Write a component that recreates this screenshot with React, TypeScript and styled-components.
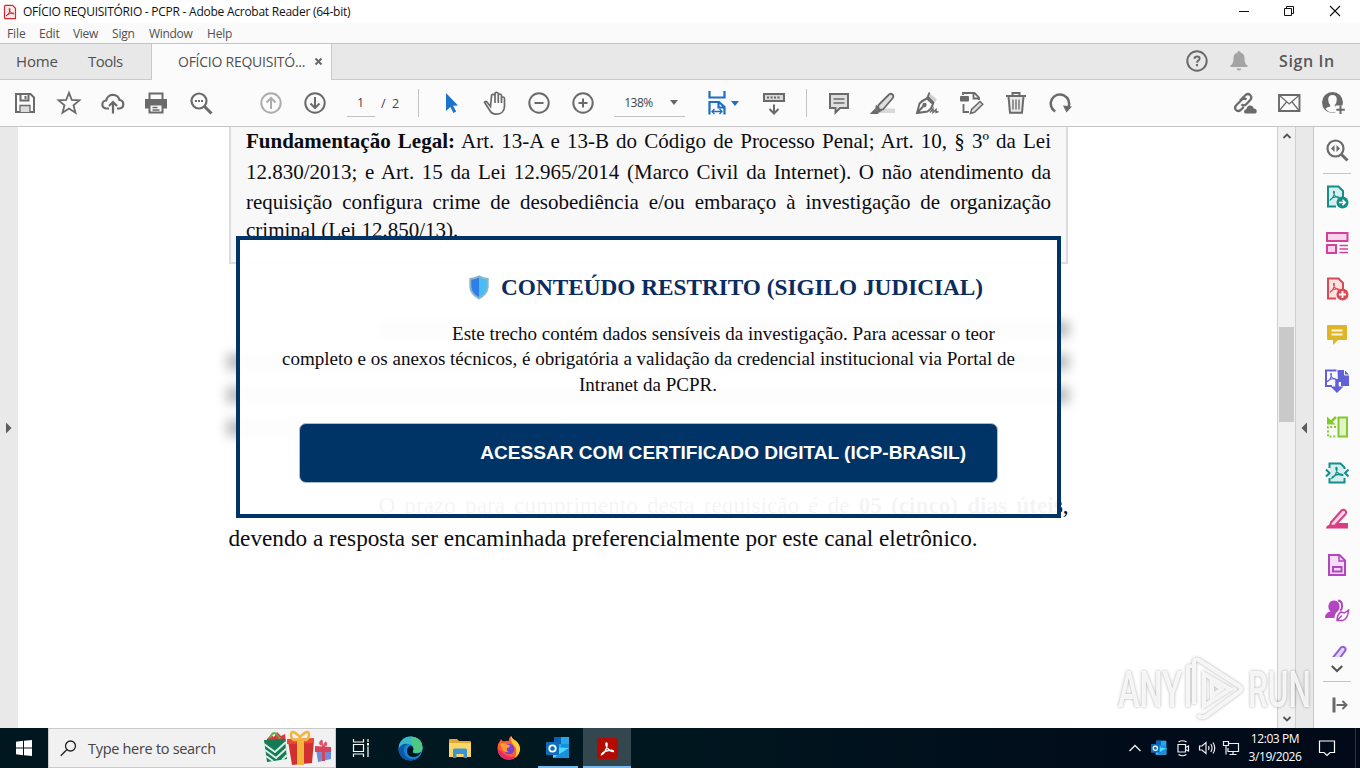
import React from "react";
import styled, { createGlobalStyle } from "styled-components";

const Global = createGlobalStyle`
  * { box-sizing: border-box; }
  body { margin: 0; overflow: hidden; font-family: "Open Sans", "Noto Sans", sans-serif; }
  #root { height: 100vh; }
`;

const Screen = styled.div`
  width: 1360px;
  height: 768px;
  display: flex;
  flex-direction: column;
  background: #fff;
  overflow: hidden;
  position: relative;
`;

const Label = styled.span<{ $size: number; $sp?: number; $color?: string; $weight?: number }>`
  font-size: ${(p) => p.$size}px;
  letter-spacing: ${(p) => p.$sp ?? 0}px;
  color: ${(p) => p.$color ?? "#505050"};
  font-weight: ${(p) => p.$weight ?? 400};
  white-space: nowrap;
`;

const Svg = styled.svg<{ $c?: string; $w?: number }>`
  display: block;
  flex: none;
  overflow: visible;
  fill: none;
  stroke: ${(p) => p.$c ?? "#6a6a6a"};
  stroke-width: ${(p) => p.$w ?? 2};
`;

type IconProps = { c?: string; w?: number; size?: number; children: React.ReactNode };
const Icon = ({ c, w, size = 24, children }: IconProps) => (
  <Svg width={size} height={size} viewBox={`0 0 ${size} ${size}`} $c={c} $w={w}>
    {children}
  </Svg>
);

/* ---------- window chrome ---------- */
const TitleBar = styled.div`
  height: 23px;
  flex: none;
  display: flex;
  align-items: center;
  padding-left: 3px;
  gap: 6px;
`;
const WindowButtons = styled.div`
  margin-left: auto;
  padding-right: 2px;
  margin-top: -2px;
  display: flex;
`;
const Cell = styled.div<{ $w: number; $h?: number }>`
  width: ${(p) => p.$w}px;
  height: ${(p) => (p.$h ? p.$h + "px" : "100%")};
  flex: none;
  display: flex;
  align-items: center;
  justify-content: center;
`;
const Gap = styled.div<{ $w: number }>`
  width: ${(p) => p.$w}px;
  flex: none;
`;
const MenuBar = styled.div`
  height: 20px;
  flex: none;
  background: #fafafa;
  display: flex;
  align-items: center;
  padding: 0 0 2px 7px;
`;
const MenuItem = styled.div<{ $w: number }>`
  width: ${(p) => p.$w}px;
`;
const TabBar = styled.div`
  height: 37px;
  flex: none;
  border-top: 1px solid #c4c4c4;
  border-bottom: 1px solid #cacaca;
  background: #e8e8e8;
  display: flex;
  align-items: center;
  padding: 0 0 1px 16px;
`;
const Tab = styled.div`
  width: 181px;
  height: 36px;
  margin-bottom: -2px;
  background: #fbfbfb;
  border: solid #c8c8c8;
  border-width: 0 1px;
  display: flex;
  align-items: center;
  padding: 0 8px 1px 26px;
  justify-content: space-between;
`;
const ToolBar = styled.div`
  height: 47px;
  flex: none;
  background: #fbfbfb;
  border-bottom: 1px solid #c6c6c6;
  display: flex;
  align-items: center;
  padding-left: 3px;
`;
const Separator = styled.div`
  width: 1px;
  height: 28px;
  background: #c4c4c4;
  flex: none;
`;
const Field = styled.div<{ $w: number }>`
  width: ${(p) => p.$w}px;
  height: 28px;
  flex: none;
  border-bottom: 1px solid #c0c0c0;
  display: flex;
  align-items: center;
  justify-content: space-between;
  padding: 0 7px 0 10px;
`;
const Caret = styled.div<{ $c?: string }>`
  border: 4px solid transparent;
  border-top: 5px solid ${(p) => p.$c ?? "#666"};
  border-bottom: 0;
`;

/* ---------- document area ---------- */
const Body = styled.div`
  flex: 1;
  min-height: 0;
  display: flex;
`;
const LeftRail = styled.div`
  width: 18px;
  flex: none;
  background: #e9e9e9;
  display: flex;
  align-items: center;
  justify-content: center;
`;
const Page = styled.div`
  width: 1259px;
  flex: none;
  position: relative;
  background: #fff;
  overflow: hidden;
  font-family: "Liberation Serif", serif;
  color: #0c0c10;
`;
const LegalBox = styled.div`
  margin-left: 211px;
  width: 839px;
  height: 137px;
  background: #f8f8f8;
  border: solid #dcdcdf;
  border-width: 0 2px 2px;
  padding: 0 15px;
  font-size: 21px;
`;
const Line = styled.div<{ $h: number; $natural?: boolean }>`
  height: ${(p) => p.$h}px;
  line-height: ${(p) => p.$h}px;
  white-space: nowrap;
  text-align: justify;
  text-align-last: ${(p) => (p.$natural ? "left" : "justify")};
`;
const Redacted = styled.div`
  margin: 57px 0 0 209px;
  width: 842px;
  display: flex;
  flex-direction: column;
  gap: 17px;
  filter: blur(6px);
`;
const RedactedLine = styled.div<{ $from?: number; $to?: number }>`
  height: 16px;
  margin-left: ${(p) => p.$from ?? 0}px;
  margin-right: ${(p) => p.$to ?? 0}px;
  background: #b8b8b8;
`;
const Closing = styled.div`
  margin: 52px 0 0 210.5px;
  width: 840px;
  font-size: 23.22px;
`;
const Indented = styled.div`
  margin-left: 150px;
`;
const Notice = styled.div`
  position: absolute;
  left: 218px;
  top: 109px;
  width: 825px;
  height: 282px;
  border: 4px solid #003366;
  background: rgba(255, 255, 255, 0.955);
`;
const NoticeTitle = styled.div`
  display: flex;
  align-items: center;
  gap: 9px;
  padding-left: 227px;
  margin: 34px 0 21px;
  height: 26px;
  font-size: 23.25px;
  font-weight: 700;
  color: #0b2c60;
  white-space: nowrap;
`;
const NoticeText = styled.div<{ $left: number; $h: number }>`
  padding-left: ${(p) => p.$left}px;
  height: ${(p) => p.$h}px;
  line-height: ${(p) => p.$h}px;
  font-size: 19.05px;
  white-space: nowrap;
`;
const NoticeButton = styled.div`
  margin: 24px 0 0 59px;
  width: 699px;
  height: 60px;
  border-radius: 7px;
  border: 1px solid #a9bccf;
  background: #003366;
  color: #fff;
  font: 700 19.08px/57px "Liberation Sans", sans-serif;
  text-align: right;
  padding-right: 31px;
  white-space: nowrap;
`;
const ScrollBar = styled.div`
  width: 19px;
  flex: none;
  background: #f1f1f1;
  border-left: 1px solid #cfcfcf;
  border-right: 1px solid #cfcfcf;
  display: flex;
  flex-direction: column;
  align-items: center;
`;
const Thumb = styled.div`
  width: 15px;
  height: 95px;
  margin: 182px 0 auto;
  background: #c9c9c9;
`;
const RightRail = styled(LeftRail)`
  border-right: 1px solid #c9c9c9;
  padding-right: 2px;
`;
const ToolPane = styled.div`
  flex: 1;
  background: #fbfbfb;
  display: flex;
  flex-direction: column;
  align-items: center;
`;
const PaneRule = styled.div`
  width: 28px;
  height: 1px;
  background: #c4c4c4;
`;
const Clipped = styled.div`
  height: 23px;
  overflow: hidden;
  width: 46px;
  display: flex;
  justify-content: center;
`;

/* ---------- taskbar ---------- */
const TaskBar = styled.div`
  height: 40px;
  flex: none;
  background: linear-gradient(90deg, #00171f 0, #001820 45%, #010b1a 85%, #020a19 100%);
  display: flex;
`;
const SearchBox = styled.div`
  width: 288px;
  height: 40px;
  background: #f1f1f1;
  border: 1px solid #c9c9c9;
  display: flex;
  align-items: center;
  padding: 0 3px 0 11px;
  gap: 11px;
`;
const Gifts = styled.svg`
  margin-left: auto;
`;
const AppSlot = styled.div<{ $active?: boolean; $w?: number }>`
  width: ${(p) => p.$w ?? 49}px;
  height: 40px;
  flex: none;
  display: flex;
  align-items: center;
  justify-content: center;
  background: ${(p) => (p.$active ? "#34474f" : "transparent")};
  box-shadow: ${(p) => (p.$active !== undefined ? "inset 0 -2px #76b9ed" : "none")};
`;
const Tray = styled.div`
  margin-left: auto;
  display: flex;
  align-items: center;
`;
const Clock = styled.div`
  width: 64px;
  display: flex;
  flex-direction: column;
  align-items: center;
  line-height: 18px;
`;
const PeekEdge = styled.div`
  width: 5px;
  height: 40px;
  border-left: 1px solid #2a3442;
`;
const Watermark = styled.svg`
  position: absolute;
  left: 1112px;
  top: 652px;
  filter: drop-shadow(0 0 1.5px rgba(0, 0, 0, 0.38));
`;

const Trefoil = ({ x = 0, y = 0, s = 1, c }: { x?: number; y?: number; s?: number; c?: string }) => (
  <path
    transform={`translate(${x} ${y}) scale(${s})`}
    stroke={c}
    strokeWidth={1.3}
    d="M1 10.5C3.5 9.5 6 5 5.7 1.2C5.6 0 4.5 .3 4.7 1.6C5.2 4.8 8 7.8 10.6 7.9C12 7.8 11 6.7 9 6.8C6 7 2.5 8.5 1.2 9.8Z"
  />
);

const Outlook = ({ size }: { size: number }) => (
  <svg width={size} height={size} viewBox="0 0 24 24">
    <rect x="8" y="1" width="15" height="14" fill="#28a8ea" />
    <path d="M8 1h7v7H8z" fill="#0364b8" />
    <path d="M15 8h8v7h-8z" fill="#1490df" />
    <path d="M7 11l16 1v9a1 1 0 0 1-1 1H7z" fill="#50d9ff" />
    <path d="M7 22l16-10v9a1 1 0 0 1-1 1z" fill="#1a8fdb" />
    <rect x="0" y="6" width="13" height="13" rx="1" fill="#0f6cbd" />
    <circle cx="6.5" cy="12.5" r="3.2" fill="none" stroke="#fff" strokeWidth="1.8" />
  </svg>
);

export default function App() {
  return (
    <>
      <Global />
      <Screen>
        <TitleBar>
          <Icon size={14} w={1.2} c="#d22a2a">
            <path d="M2.5 .3h7l3 3v10.4h-10q-1 0-1-1v-11q0-1.400 1-1.400z" fill="#fdeaea" />
            <Trefoil x={2.6} y={3} s={0.75} c="#c41e1e" />
          </Icon>
          <Label $size={12} $sp={-0.25} $color="#111">
            OFÍCIO REQUISITÓRIO - PCPR - Adobe Acrobat Reader (64-bit)
          </Label>
          <WindowButtons>
            <Cell $w={46} $h={22}>
              <Icon size={12} c="#111" w={1}><path d="M1 6.500h10" /></Icon>
            </Cell>
            <Cell $w={44} $h={22}>
              <Icon size={12} c="#111" w={1}>
                <path d="M1.500 3.500h7v7h-7zM3.500 3.500v-2h7v7h-2" />
              </Icon>
            </Cell>
            <Cell $w={47} $h={22}>
              <Icon size={12} c="#111" w={1.1}><path d="M1 1l10 10M11 1L1 11" /></Icon>
            </Cell>
          </WindowButtons>
        </TitleBar>

        <MenuBar>
          <MenuItem $w={32}><Label $size={12} $sp={-0.1}>File</Label></MenuItem>
          <MenuItem $w={34}><Label $size={12} $sp={-0.2}>Edit</Label></MenuItem>
          <MenuItem $w={39}><Label $size={12} $sp={-0.3}>View</Label></MenuItem>
          <MenuItem $w={37}><Label $size={12} $sp={-0.2}>Sign</Label></MenuItem>
          <MenuItem $w={58}><Label $size={12} $sp={-0.3}>Window</Label></MenuItem>
          <MenuItem $w={40}><Label $size={12} $sp={-0.2}>Help</Label></MenuItem>
        </MenuBar>

        <TabBar>
          <MenuItem $w={72}><Label $size={15} $sp={-0.15}>Home</Label></MenuItem>
          <MenuItem $w={63}><Label $size={15} $sp={-0.5}>Tools</Label></MenuItem>
          <Tab>
            <Label $size={14} $sp={-0.25}>OFÍCIO REQUISITÓ...</Label>
            <Icon size={9} w={2}><path d="M1.500 1.500l6 6M7.500 1.500l-6 6" /></Icon>
          </Tab>
          <Gap $w={844} />
          <Cell $w={42}>
            <Icon>
              <circle cx="12" cy="12" r="9.700" />
              <path d="M9.500 9.800q.2-2.300 2.600-2.300q2.500 0 2.500 2.100q0 1.200-1.400 2.100q-1.100.7-1.100 2.100M12 15v2.200" />
            </Icon>
          </Cell>
          <Cell $w={41}>
            <Icon c="none">
              <path fill="#a4a4a4" d="M12 2q1.500 0 1.500 1.600q4 1 4 5.600q0 5.500 3 7.300v1.500h-17v-1.500q3-1.800 3-7.300q0-4.600 4-5.600q0-1.600 1.500-1.600zM9.500 19.500h5q-.5 2-2.500 2t-2.500-2z" />
            </Icon>
          </Cell>
          <Gap $w={20} />
          <Label $size={16} $sp={0.6} $weight={600} $color="#585858">Sign In</Label>
        </TabBar>

        <ToolBar>
          <Cell $w={44}>
            <Icon>
              <path d="M3 3h14.500L21 6.500V21H3z" />
              <path d="M7.500 3v6.500h8V3M12.500 5v3" />
              <path d="M7 21v-6.500h10V21" fill="#dcdcdc" strokeWidth="1.300" />
            </Icon>
          </Cell>
          <Cell $w={44}>
            <Icon w={1.8}>
              <path d="M12 1.800l2.800 7.200 7.600.4-5.900 4.900 2 7.500L12 17.600 5.500 21.800l2-7.500-5.900-4.900 7.600-.4z" />
            </Icon>
          </Cell>
          <Cell $w={44}>
            <Icon w={2.200}>
              <path d="M8 17.500H5.500a4 4 0 0 1-.3-8 6.800 6.800 0 0 1 13.300-.5 4.300 4.300 0 0 1 .3 8.500H16" />
              <path d="M12 22.500V11.500M8 15l4-4 4 4" />
            </Icon>
          </Cell>
          <Cell $w={42}>
            <Icon>
              <path d="M5.500 8V2.500h13V8" />
              <path d="M1 8h22v9.500h-4v-4H5v4H1z" fill="#6a6a6a" stroke="none" />
              <path d="M5.500 13.500h13v8h-13z" fill="#fbfbfb" />
              <path d="M8.500 16.500h5M8.500 19h7" strokeWidth="1.300" />
            </Icon>
          </Cell>
          <Cell $w={47}>
            <Icon w={2.200}>
              <circle cx="10" cy="10" r="7.500" />
              <path d="M15.500 15.500l7 7" strokeWidth="3" />
              <path d="M6 10h8" strokeDasharray="2 1" />
            </Icon>
          </Cell>
          <Gap $w={25} />
          <Cell $w={44}>
            <Icon c="#acacac"><circle cx="12" cy="12" r="9.700" /><path d="M12 18V7M7.500 11.500L12 7l4.500 4.500" /></Icon>
          </Cell>
          <Cell $w={44}>
            <Icon><circle cx="12" cy="12" r="9.700" /><path d="M12 6v11M7.500 12.500L12 17l4.500-4.500" /></Icon>
          </Cell>
          <Gap $w={10} />
          <Field $w={28}><Label $size={12.5} $color="#444">1</Label></Field>
          <Gap $w={6} />
          <Label $size={12.5} $color="#444">/ &nbsp;2</Label>
          <Gap $w={19} />
          <Separator />
          <Gap $w={10} />
          <Cell $w={44}>
            <Icon c="none"><path fill="#1b74c9" d="M7 2l12 12.500-5 .3 3.200 5.700-2.800 1.500-3-6L7 20z" /></Icon>
          </Cell>
          <Cell $w={44}>
            <Icon w={1.700}>
              <path d="M7.500 15.500L4 11q-1.500-1.200-2.500.3L6.500 19q2.300 4.200 6.500 4.200c5 0 8.500-3 8.500-8V7.500q-.2-1.500-1.500-1.500t-1.500 1.500V12V4.500Q18.200 3 16.800 3t-1.500 1.500V12V3Q15.200 1.300 13.500 1.300T12 3v9V4.800Q11.700 3.300 10 3.300T8.500 5z" />
            </Icon>
          </Cell>
          <Cell $w={44}>
            <Icon><circle cx="12" cy="12" r="9.700" /><path d="M7.500 12h9" /></Icon>
          </Cell>
          <Cell $w={44}>
            <Icon><circle cx="12" cy="12" r="9.700" /><path d="M7.500 12h9M12 7.500v9" /></Icon>
          </Cell>
          <Gap $w={9} />
          <Field $w={71}><Label $size={12} $sp={-0.5} $color="#444">138%</Label><Caret /></Field>
          <Gap $w={20} />
          <Cell $w={24}>
            <Icon c="#1b6fc0" w={2.200}>
              <path d="M4.500 0v6.500h15V0M4.500 23.500V11h9.500l5.500 5v7.500M13.500 11v5.500h6" />
              <path d="M7.500 20.500h9M9.500 18l-2.500 2.500 2.500 2.500M14.500 18l2.500 2.500-2.500 2.500" strokeWidth="1.300" />
            </Icon>
          </Cell>
          <Gap $w={2} />
          <Caret $c="#1b6fc0" />
          <Gap $w={22} />
          <Cell $w={26}>
            <Icon>
              <path d="M2 3h20v7H2z" fill="#d8d8d8" />
              <path d="M5 6.500h14" strokeDasharray="2 1.500" />
              <path d="M12 13.500v9M7.500 18l4.500 4.500 4.500-4.500" />
            </Icon>
          </Cell>
          <Gap $w={19} />
          <Separator />
          <Gap $w={10} />
          <Cell $w={44}>
            <Icon><path d="M3 3h18v14h-8l-4.500 4.500V17H3z" fill="#dedede" /><path d="M6.500 8h11M6.500 12h11" strokeWidth="1.500" /></Icon>
          </Cell>
          <Cell $w={44}>
            <Icon w={1.800}>
              <path d="M10 17.500h14v4.500H8z" fill="#d8d8d8" stroke="none" />
              <path d="M7.500 14L18 3.500q2-1.500 3.500 0t.3 3.500L12 18.500l-5 .7z" fill="#dedede" />
              <path d="M5.500 15.500l4 4-2.500 1.500h-2.500z" />
              <path d="M1 22l3-3 2 3z" fill="#6a6a6a" />
            </Icon>
          </Cell>
          <Cell $w={44}>
            <Icon w={1.900}>
              <path d="M12 7.500L15 2.500 22 8.500l-4 4.500z" fill="#d0d0d0" stroke="none" />
              <path d="M2 22L4.500 12.500Q8 9 12 7.500L18 13q-1.500 5-5.500 7.500zM2 22l6.500-7" />
              <circle cx="9.500" cy="14" r="1.200" />
              <path d="M12 7.500L14.500 1.500M12.500 5.500l6.500 7" />
              <path d="M15 21.500l3-4v4l3-3v3l2.500-1" strokeWidth="1.400" />
            </Icon>
          </Cell>
          <Cell $w={44}>
            <Icon w={1.800}>
              <path d="M4 4V2h11.500L20 6.500V9M14.500 2v5.500H20M4.500 13v8H10" />
              <rect x="1" y="5" width="9" height="5.500" rx="1" fill="#6a6a6a" stroke="none" />
              <path d="M11.500 22.500l1-4L21 10.500l2.800 2.800-8.300 8z" fill="#dedede" strokeWidth="1.500" />
            </Icon>
          </Cell>
          <Cell $w={46}>
            <Icon><path d="M4.500 5.500L6 21.800h12l1.500-16.300" fill="#e8e8e8" /><path d="M2 5h20M8.500 4.500V2h7v2.500" /><path d="M9 8.500v10M12 8.500v10M15 8.500v10" strokeWidth="1.300" /></Icon>
          </Cell>
          <Cell $w={41}>
            <Icon w={2.500}><path d="M7.200 20.500a9.200 9.200 0 1 1 13.300-4.500" /><path fill="#6a6a6a" stroke="none" d="M15 14.500l9 1-5.500 6z" /></Icon>
          </Cell>
          <Gap $w={142} />
          <Cell $w={44}>
            <Icon w={2.200}>
              <path d="M8 9.500l5.500-5.500q2.500-2 4.700 0t.3 4.700L14 13.500q-2.500 1.800-4.500-.3M14.500 8.500q-2.500-2-4.500 0l-6 6q-2 2.500 0 4.500t4.700 0l3-3" />
              <path d="M13.500 22.500q-1.500 0-1.500-2t2.500-2.500q.5-3.500 3.500-3.500t3.700 3q3 0 3 2.700t-2 2.300z" fill="#6a6a6a" stroke="none" />
            </Icon>
          </Cell>
          <Cell $w={45}>
            <Icon w={1.900}><path d="M2 4h20.500v16H2z" /><path d="M2 4l10.200 9L22.500 4M2 20l7.500-9M22.500 20L15 11" strokeWidth="1.200" /></Icon>
          </Cell>
          <Cell $w={44}>
            <Icon w={2}>
              <circle cx="11.500" cy="11.500" r="10.500" fill="#6a6a6a" stroke="none" />
              <path d="M11.500 4q4.300 0 4.300 4.500 0 3.500-2 5.500v1.500q3 .5 4.700 2-2.500 4-7 4t-7-4q1.700-1.500 4.700-2V14q-2-2-2-5.500Q7.200 4 11.500 4z" fill="#fbfbfb" stroke="none" />
              <path d="M14.500 14.500h9v9h-9z" fill="#fbfbfb" stroke="none" />
              <path d="M19.500 14.500v8.500M15.300 18.700h8.500" />
            </Icon>
          </Cell>
        </ToolBar>

        <Body>
          <LeftRail><Icon size={8} c="none"><path d="M1 -1.500l5.500 5.500-5.500 5.500z" fill="#5c5c5c" /></Icon></LeftRail>
          <Page>
            <LegalBox>
              <Line $h={28}><b>Fundamentação Legal:</b> Art. 13-A e 13-B do Código de Processo Penal; Art. 10, § 3º da Lei</Line>
              <Line $h={34}>12.830/2013; e Art. 15 da Lei 12.965/2014 (Marco Civil da Internet). O não atendimento da</Line>
              <Line $h={27}>requisição configura crime de desobediência e/ou embaraço à investigação de organização</Line>
              <Line $h={29} $natural>criminal (Lei 12.850/13).</Line>
            </LegalBox>
            <Redacted>
              <RedactedLine $from={150} />
              <RedactedLine />
              <RedactedLine />
              <RedactedLine $to={500} />
            </Redacted>
            <Closing>
              <Indented>
                <Line $h={34}>O prazo para cumprimento desta requisição é de <b>05 (cinco) dias úteis</b>,</Line>
              </Indented>
              <Line $h={32} $natural>devendo a resposta ser encaminhada preferencialmente por este canal eletrônico.</Line>
            </Closing>
            <Notice>
              <NoticeTitle>
                <Icon size={25} c="none">
                  <path d="M12 .3q4.500 2.500 9.700 2.800V12q-.7 8-9.700 12.500Q3 20 2.300 12V3.100Q7.500 2.800 12 .3z" fill="#8fb4c8" />
                  <path d="M12 2.500Q8 4.500 4.300 4.800V12q.6 6.500 7.700 10.200z" fill="#2f7fe6" />
                  <path d="M12 2.500q4 2 7.700 2.300V12q-.6 6.500-7.700 10.200z" fill="#46bdf8" />
                </Icon>
                CONTEÚDO RESTRITO (SIGILO JUDICIAL)
              </NoticeTitle>
              <NoticeText $left={212} $h={26}>Este trecho contém dados sensíveis da investigação. Para acessar o teor</NoticeText>
              <NoticeText $left={42} $h={24}>completo e os anexos técnicos, é obrigatória a validação da credencial institucional via Portal de</NoticeText>
              <NoticeText $left={339} $h={28}>Intranet da PCPR.</NoticeText>
              <NoticeButton>ACESSAR COM CERTIFICADO DIGITAL (ICP-BRASIL)</NoticeButton>
            </Notice>
          </Page>
          <ScrollBar>
            <Cell $w={16} $h={18}><Icon size={10} w={1.800} c="#555"><path d="M1.500 7L5 3.500 8.500 7" /></Icon></Cell>
            <Thumb />
            <Cell $w={16} $h={18}><Icon size={10} w={1.800} c="#555"><path d="M1.500 3L5 6.500 8.500 3" /></Icon></Cell>
          </ScrollBar>
          <RightRail><Icon size={8} c="none"><path d="M7 -1.500l-5.500 5.500 5.500 5.500z" fill="#5c5c5c" /></Icon></RightRail>
          <ToolPane>
            <Cell $w={46} $h={46}>
              <Icon w={2.200}><circle cx="10.500" cy="10.500" r="8" /><path d="M16.500 16.500l6 6" strokeWidth="3" /><path d="M9.500 7v7L6 10.500zM11.500 7v7l3.500-3.500z" fill="#6a6a6a" stroke="none" /></Icon>
            </Cell>
            <PaneRule />
            <Cell $w={46} $h={46}>
              <Icon c="#138e88"><path d="M11 21.500H3v-20h10.500l4.500 4.500v6" fill="#d5eeee" /><Trefoil x={4.500} y={6} s={0.850} /><circle cx="17.500" cy="17.500" r="6" fill="#138e88" stroke="none" /><path d="M14 17.500h6M17.500 14.800l2.700 2.700-2.700 2.700" stroke="#fff" strokeWidth="1.600" /></Icon>
            </Cell>
            <Cell $w={46} $h={46}>
              <Icon c="#d4409c"><path d="M2 2h20.500v8H2z" fill="#fbd3ea" /><path d="M2 14h9v8H2z" fill="#fbd3ea" /><path d="M14.500 14.500h8.500M14.500 18h8.500M14.500 21.500h8.500" strokeWidth="1.300" /></Icon>
            </Cell>
            <Cell $w={46} $h={46}>
              <Icon c="#d94a55"><path d="M11 21.500H3v-20h10.500l4.500 4.500v6" fill="#fde2e2" /><Trefoil x={4.500} y={6} s={0.850} /><circle cx="17.500" cy="17.500" r="6" fill="#d94a55" stroke="none" /><path d="M14 17.500h7M17.500 14v7" stroke="#fff" strokeWidth="1.800" /></Icon>
            </Cell>
            <Cell $w={46} $h={46}>
              <Icon c="none"><path d="M3 2h18q1 0 1 1v13q0 1-1 1h-8l-5 5v-5H3q-1 0-1-1V3q0-1 1-1z" fill="#dfb527" /><path d="M6.500 7.500h11M6.500 11.500h11" stroke="#fff8dc" strokeWidth="1.800" /></Icon>
            </Cell>
            <Cell $w={46} $h={46}>
              <Icon c="#6060d8"><path d="M7 17H1V1.500h10.500M16 17" /><Trefoil x={1.800} y={4} s={0.800} /><path d="M12.500 1h7l4.500 4.500V17h-8v-4h-3z" fill="#6060d8" stroke="none" /><path d="M19.500 0v6H24" stroke="#fbfbfb" strokeWidth="1" /><path d="M12 10v10" strokeWidth="3.500" /><path d="M5.500 17.500h13L12 24z" fill="#6060d8" stroke="none" /></Icon>
            </Cell>
            <Cell $w={46} $h={46}>
              <Icon c="#82c92d"><path d="M13.500 2.500h8.500v19h-8.500z" fill="#e0f4c8" /><path d="M11 12H3v9.500h8" strokeDasharray="2 1.800" /><path d="M11 2L5 8" strokeWidth="2.500" /><path d="M2 1.500l8.500 8H2z" fill="#82c92d" stroke="none" /></Icon>
            </Cell>
            <Cell $w={46} $h={46}>
              <Icon c="#138e88"><path d="M4.500 7V2.500h11L19.500 6.500V17v4.500h-15V17" fill="#d5eeee" stroke="none" /><path d="M4.500 7V2.500h11L19.500 6.500M4.500 17v4.500h15V17M19.500 6v2" /><Trefoil x={6} y={6} s={1.050} /><path d="M1 8.500l3.500 3.500L1 15.500M23.500 8.500L20 12l3.500 3.500" /></Icon>
            </Cell>
            <Cell $w={46} $h={46}>
              <Icon c="#d93d82"><path d="M9 16h14v5.500H1q0-3 4-4z" fill="#d93d82" stroke="none" /><path d="M6 15.500L16.500 3.500q2-1.500 3.700 0t.3 3.700L10 18.500l-5 .5z" fill="#fbd3e4" /></Icon>
            </Cell>
            <Cell $w={46} $h={46}>
              <Icon c="#b344c2"><path d="M4 2h10.500L20 7.500V22H4z" fill="#f5dcf8" /><path d="M14 2v6h6" strokeWidth="1.500" /><path d="M8 14h8.500v4.500H8z" /></Icon>
            </Cell>
            <Cell $w={46} $h={46}>
              <Icon c="#b344c2"><path d="M0 19q0-5.500 5.500-6.500-3-3-1.800-7T9 1.500t5.300 4-1.800 7q-3 2.500-3 6.500z" fill="#b344c2" stroke="none" /><path d="M13 1.500q4 .5 4 5t-2 5" /><path d="M12 21.500q0-6 4-8.500l3.500 1L23.500 11q-.5 9-6 10.500zM12 21.500l5-5" strokeWidth="1.500" fill="#fbfbfb" /></Icon>
            </Cell>
            <Clipped>
              <Icon c="#9060d0"><path d="M6 26L16 13.500q2-1.500 3.700 0t.3 3.500L12 28" fill="#e2d2fa" /></Icon>
            </Clipped>
            <Cell $w={46} $h={24}>
              <Icon size={12} w={2.200} c="#555"><path d="M.8 3L6 8l5.200-5" /></Icon>
            </Cell>
            <PaneRule />
            <Cell $w={46} $h={46}>
              <Icon w={2}><path d="M9 4.500v15" strokeWidth="3" /><path d="M11.500 12h10M17.500 8l4 4-4 4" /></Icon>
            </Cell>
          </ToolPane>
        </Body>

        <TaskBar>
          <Cell $w={48}>
            <Icon size={16} c="none"><path fill="#fff" d="M0 1.800l7-1v6.700H0zM8 .7L16 0v7.500H8zM0 8.500h7v6.700l-7-1zM8 8.500h8V16l-8-.7z" /></Icon>
          </Cell>
          <SearchBox>
            <Icon size={17} c="#222" w={1.300}><circle cx="10.500" cy="6" r="5" /><path d="M7 9.500L.8 15.800" /></Icon>
            <Label $size={14.500} $sp={-0.3} $color="#444">Type here to search</Label>
            <Gifts width="68" height="36" viewBox="0 0 68 36">
              <path d="M3 9l4-4 3 2 3-5 4 4 4-2 1 8H3z" fill="#d43b3b" />
              <path d="M6 8q3-8 7-3t4 4" fill="none" stroke="#5cb445" strokeWidth="2" />
              <path d="M0 10l21-1 2 20-20 3z" fill="#157a55" />
              <path d="M0 14l11 8 11-10M1 20l11 8 11-10M2 26l7 5M18 30l5-5" fill="none" stroke="#d8efe4" strokeWidth="2" />
              <path d="M24 11l26-1-2 23-20 2z" fill="#d2302f" />
              <path d="M23 9l27-1v5l-27 1z" fill="#e84a3a" />
              <path d="M33 9h7v26h-7z" fill="#f2b43c" />
              <path d="M36 9q-9 3-9-4t9 2q9-9 9-2t-9 4z" fill="none" stroke="#f2b43c" strokeWidth="2.500" />
              <path d="M52 19h15v10l-13 3z" fill="#6c8ed8" />
              <path d="M51 16l16 1v5H51z" fill="#d8435c" />
              <path d="M58 16h3v15h-3z" fill="#d8435c" />
              <path d="M59 16q-6-1-3-5t3 4q3-6 4-2t-4 3z" fill="#e0556a" />
            </Gifts>
          </SearchBox>
          <AppSlot $w={49}>
            <Icon size={18} c="#fff" w={1.200}><path d="M1.500 0v3h10V0M1.500 5.500h10v7h-10zM1.500 18v-3h10v3M16 0v3M16 7.500V18" /><path d="M15 4h2v2.500h-2z" fill="#fff" stroke="none" /></Icon>
          </AppSlot>
          <AppSlot $w={50}>
            <svg width="25" height="25" viewBox="0 0 25 25">
              <circle cx="12.500" cy="12.500" r="12" fill="#1683d8" />
              <path d="M1 9Q4 .5 12.500.5q11 0 12 10.500.3 6-6.500 6-4 0-3-2.500 1.500-6-5-6.500Q4 7.500 1 13z" fill="#38b9c8" />
              <path d="M13 .5q11 1 11.500 10.500.3 6-6.500 6-4 0-3-2.500 1.500-3-.5-5.500z" fill="#55cc70" opacity=".8" />
              <path d="M9.500 8Q3 13 7.500 19.500q4.500 5.500 12 2.500-3 2.500-7 2.500Q2 24.500.5 13.500 3 7 9.500 8z" fill="#0c59a8" />
              <path d="M15 15q-1 2.500 3 2.500 3 0 5-1.500-2.500 5-8 5-5.500-.5-6-5.500 0-4 3-6 3 .5 3.500 3z" fill="#00171f" />
            </svg>
          </AppSlot>
          <AppSlot $w={49}>
            <svg width="22" height="20" viewBox="0 0 22 20">
              <path d="M0 2q0-1 1-1h7l2 2h11q1 0 1 1v14H0z" fill="#e9a52d" />
              <path d="M0 5h22v14H0z" fill="#fbd768" />
              <path d="M4 12q0-1.500 1.500-1.500h11q1.500 0 1.500 1.500v8h-3.500v-4h-7v4H4z" fill="#3d94d1" />
            </svg>
          </AppSlot>
          <AppSlot $w={49}>
            <svg width="24" height="24" viewBox="0 0 24 24">
              <path d="M4 3q1 2 3 2.500Q9 4.500 12 5q-.5-3 2-5 1 3 5 5 4.500 4 4 9-1.500 9.500-11 9.800Q2 23.500.7 14 0 8 3 5z" fill="#ff5c33" />
              <path d="M14 0q1 3 5 5 4.500 4 4 9-1 5-5 7.500 3-8-1-12-4-4-3-9.500z" fill="#ffcf3a" />
              <path d="M.7 14Q2 22 11 23.800q5 0 8-3Q11 22 6 17q-3-4-5.300-3z" fill="#e82a6d" />
              <circle cx="12" cy="13" r="5.300" fill="#7542d4" />
              <path d="M3 8q5-2 7 .5l3 1q0 2-3 2.500-1 3 2 4-5 1-6.500-3z" fill="#ff9a35" />
            </svg>
          </AppSlot>
          <AppSlot $w={5} />
          <AppSlot $w={40} $active={false}><Outlook size={24} /></AppSlot>
          <AppSlot $w={5} />
          <AppSlot $w={48} $active>
            <Icon size={21} c="#fff"><rect width="21" height="21" rx="3" fill="#b30b00" stroke="none" /><Trefoil x={3.500} y={4.500} s={1.150} c="#fff" /></Icon>
          </AppSlot>
          <Tray>
            <Cell $w={24}><Icon size={14} c="#eee" w={1.400}><path d="M1.500 10L7 4.500l5.500 5.500" /></Icon></Cell>
            <Cell $w={24}><Outlook size={16} /></Cell>
            <Cell $w={24}><Icon size={16} c="#eee" w={1.200}><path d="M3 4.500h7.500v7.500H3zM10.500 7.500l3-1.500v5l-3-1.500M3.500 2q4-2.500 8 0M3.500 14.500q4 2.500 8 0" /></Icon></Cell>
            <Cell $w={24}><Icon size={18} c="#eee" w={1.200}><path d="M1.500 7h2.500l4-3.500v11L4 11H1.500zM10.500 7q1 2 0 4M12.800 5q2.500 4 0 8M15 3.500q3.500 5.500 0 11" /></Icon></Cell>
            <Cell $w={24}><Icon size={16} c="#eee" w={1.200}><path d="M6 3.500h9.500v8H5V8M10 11.500v3M6.500 14.500h7M.5 1.500h5v4h-5zM3 5.500v9" /></Icon></Cell>
            <Clock>
              <Label $size={12} $sp={-0.4} $color="#fff">12:03 PM</Label>
              <Label $size={12} $sp={-0.45} $color="#fff">3/19/2026</Label>
            </Clock>
            <Cell $w={40}><Icon size={18} c="#fff" w={1.200}><path d="M1.500 2h15v11.500H12L9 16.500l-3-3H1.500z" /></Icon></Cell>
            <Gap $w={8} />
            <PeekEdge />
          </Tray>
        </TaskBar>

        <Watermark width="216" height="74" viewBox="0 0 216 74" fill="rgba(255,255,255,.85)" fontFamily="Roboto, sans-serif" fontSize="50" fontWeight="500">
          <text transform="translate(6 55) scale(.65 1)">ANY</text>
          <path d="M76 55V16q0-2 4-2M82 52V11q0-5 5-3l40 26q4 3 0 6L94 64q-5 3-8-1M92 22v32l26-17zM100 30v14l10-7z" fill="none" stroke="#fff" strokeOpacity=".85" strokeWidth="4" />
          <text transform="translate(136 55) scale(.63 1)">RUN</text>
        </Watermark>
      </Screen>
    </>
  );
}
